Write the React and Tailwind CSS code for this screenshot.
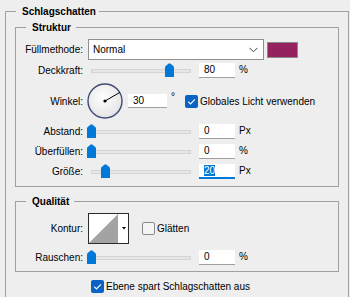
import React from 'react';

function Label({ children, className = '' }) {
  return <div className={`w-[67px] shrink-0 text-right ${className}`}>{children}</div>;
}

function Thumb({ left }) {
  return (
    <svg className="absolute top-0" style={{ left }} width="9" height="14" viewBox="0 0 9 14">
      <path d="M0 4.5 Q0 3.6 1 2.8 L3.4 0.7 Q4.5 -0.2 5.6 0.7 L8 2.8 Q9 3.6 9 4.5 V14 H0 Z" fill="#0078d7" />
    </svg>
  );
}

function Slider({ thumb }) {
  return (
    <div className="relative ml-[4px] h-[15px] w-[104px] shrink-0">
      <div className="absolute left-[4px] right-0 top-[6px] h-[4px] border border-[#d4d4d4] bg-[#e6e6e6]" />
      <Thumb left={thumb} />
    </div>
  );
}

function NumBox({ value, focused }) {
  return (
    <div
      className={`ml-[8px] h-[15px] w-[36px] shrink-0 bg-white pl-[5px] leading-[14px] ${
        focused ? 'border-b-2 border-[#0078d7]' : 'border-b border-[#a0a0a0]'
      }`}
    >
      {focused ? <span className="bg-[#0078d7] text-white">{value}</span> : value}
    </div>
  );
}

function Unit({ children }) {
  return <div className="ml-[4px] self-start leading-[13px]">{children}</div>;
}

function SliderRow({ label, thumb, value, unit, focused, className = '' }) {
  return (
    <div className={`flex h-[15px] items-center ${className}`}>
      <Label>{label}</Label>
      <Slider thumb={thumb} />
      <NumBox value={value} focused={focused} />
      <Unit>{unit}</Unit>
    </div>
  );
}

function Check({ checked }) {
  if (!checked) {
    return <div className="h-[13px] w-[13px] shrink-0 rounded-[2px] border border-[#8a8a8a] bg-[#f4f4f4]" />;
  }
  return (
    <svg width="13" height="13" viewBox="0 0 13 13" className="shrink-0">
      <rect x="0" y="0" width="13" height="13" rx="2" fill="#0a63c4" />
      <path d="M3.2 6.6 L5.5 8.9 L9.9 4.3" stroke="#fff" strokeWidth="1.1" fill="none" />
    </svg>
  );
}

function Dial() {
  return (
    <svg width="36" height="36" viewBox="0 0 36 36" className="ml-[4px] shrink-0">
      <defs>
        <radialGradient id="dialfill" cx="45%" cy="40%" r="60%">
          <stop offset="0%" stopColor="#ffffff" />
          <stop offset="100%" stopColor="#e4e4e4" />
        </radialGradient>
      </defs>
      <circle cx="18" cy="18" r="17" fill="url(#dialfill)" stroke="#3f4a76" strokeWidth="1.4" />
      <line x1="18" y1="18" x2="32.7" y2="9.5" stroke="#000" strokeWidth="1" />
      <circle cx="18" cy="18" r="1.6" fill="#000" />
    </svg>
  );
}

function Contour() {
  return (
    <svg width="41" height="31" viewBox="0 0 41 31" className="ml-[5px] shrink-0">
      <rect x="0.5" y="0.5" width="40" height="30" fill="#fff" stroke="#2b2b2b" />
      <polygon points="1,30 30,1 30,30" fill="#a3a3a3" />
      <polygon points="34,14 38,14 36,16.5" fill="#000" />
    </svg>
  );
}

export default function App() {
  return (
    <div className="h-[297px] w-[350px] overflow-hidden bg-[#eeeeee] pl-[5px] pt-[5px] font-['Liberation_Sans',Arial,sans-serif] text-[10px] text-black">
      <fieldset className="w-[344px] border border-[#a0a0a0] px-[9px] pb-[20px]">
        <legend className="ml-[1px] pl-[6px] pr-[3px] text-[10px] font-bold leading-[13px]">Schlagschatten</legend>

        {/* Struktur */}
        <fieldset className="mt-[3px] w-[324px] border border-[#a0a0a0] pb-[7px]">
          <legend className="ml-[10px] pl-[6px] pr-[5px] font-bold leading-[13px]">Struktur</legend>

          <div className="mt-[5px] flex h-[21px] items-center">
            <Label>Füllmethode:</Label>
            <div className="ml-[5px] flex h-[21px] w-[176px] items-center justify-between border border-[#8f8f8f] bg-white pl-[4px] pr-[5px]">
              <span>Normal</span>
              <svg width="9" height="6" viewBox="0 0 9 6">
                <path d="M0.5 0.8 L4.5 4.8 L8.5 0.8" stroke="#444" strokeWidth="1" fill="none" />
              </svg>
            </div>
            <div className="ml-[3px] h-[16px] w-[31px] border border-[#8a8a8a] bg-[#93225f]" />
          </div>

          <SliderRow className="mt-[3px]" label="Deckkraft:" thumb={78} value="80" unit="%" />

          <div className="mt-[5px] flex h-[36px] items-center">
            <Label>Winkel:</Label>
            <Dial />
            <div className="ml-[5px] h-[14px] w-[39px] shrink-0 border-b border-[#a0a0a0] bg-white pl-[5px] leading-[13px]">30</div>
            <div className="ml-[4px] w-[14px] self-start pt-[9px] leading-[10px]">°</div>
            <Check checked />
            <span className="ml-[2px]">Globales Licht verwenden</span>
          </div>

          <SliderRow className="mt-[5px]" label="Abstand:" thumb={0} value="0" unit="Px" />
          <SliderRow className="mt-[5px]" label="Überfüllen:" thumb={0} value="0" unit="%" />
          <SliderRow className="mt-[5px]" label="Größe:" thumb={14} value="20" unit="Px" focused />
        </fieldset>

        {/* Qualität */}
        <fieldset className="mt-[8px] w-[324px] border border-[#a0a0a0] pb-[6px]">
          <legend className="ml-[10px] pl-[6px] pr-[5px] font-bold leading-[13px]">Qualität</legend>

          <div className="mt-[5px] flex h-[31px] items-center">
            <Label>Kontur:</Label>
            <Contour />
            <div className="ml-[13px]">
              <Check />
            </div>
            <span className="ml-[2px]">Glätten</span>
          </div>

          <SliderRow className="mt-[6px]" label="Rauschen:" thumb={0} value="0" unit="%" />
        </fieldset>

        <div className="ml-[76px] mt-[7px] flex items-center">
          <Check checked />
          <span className="ml-[2px]">Ebene spart Schlagschatten aus</span>
        </div>
      </fieldset>
    </div>
  );
}
